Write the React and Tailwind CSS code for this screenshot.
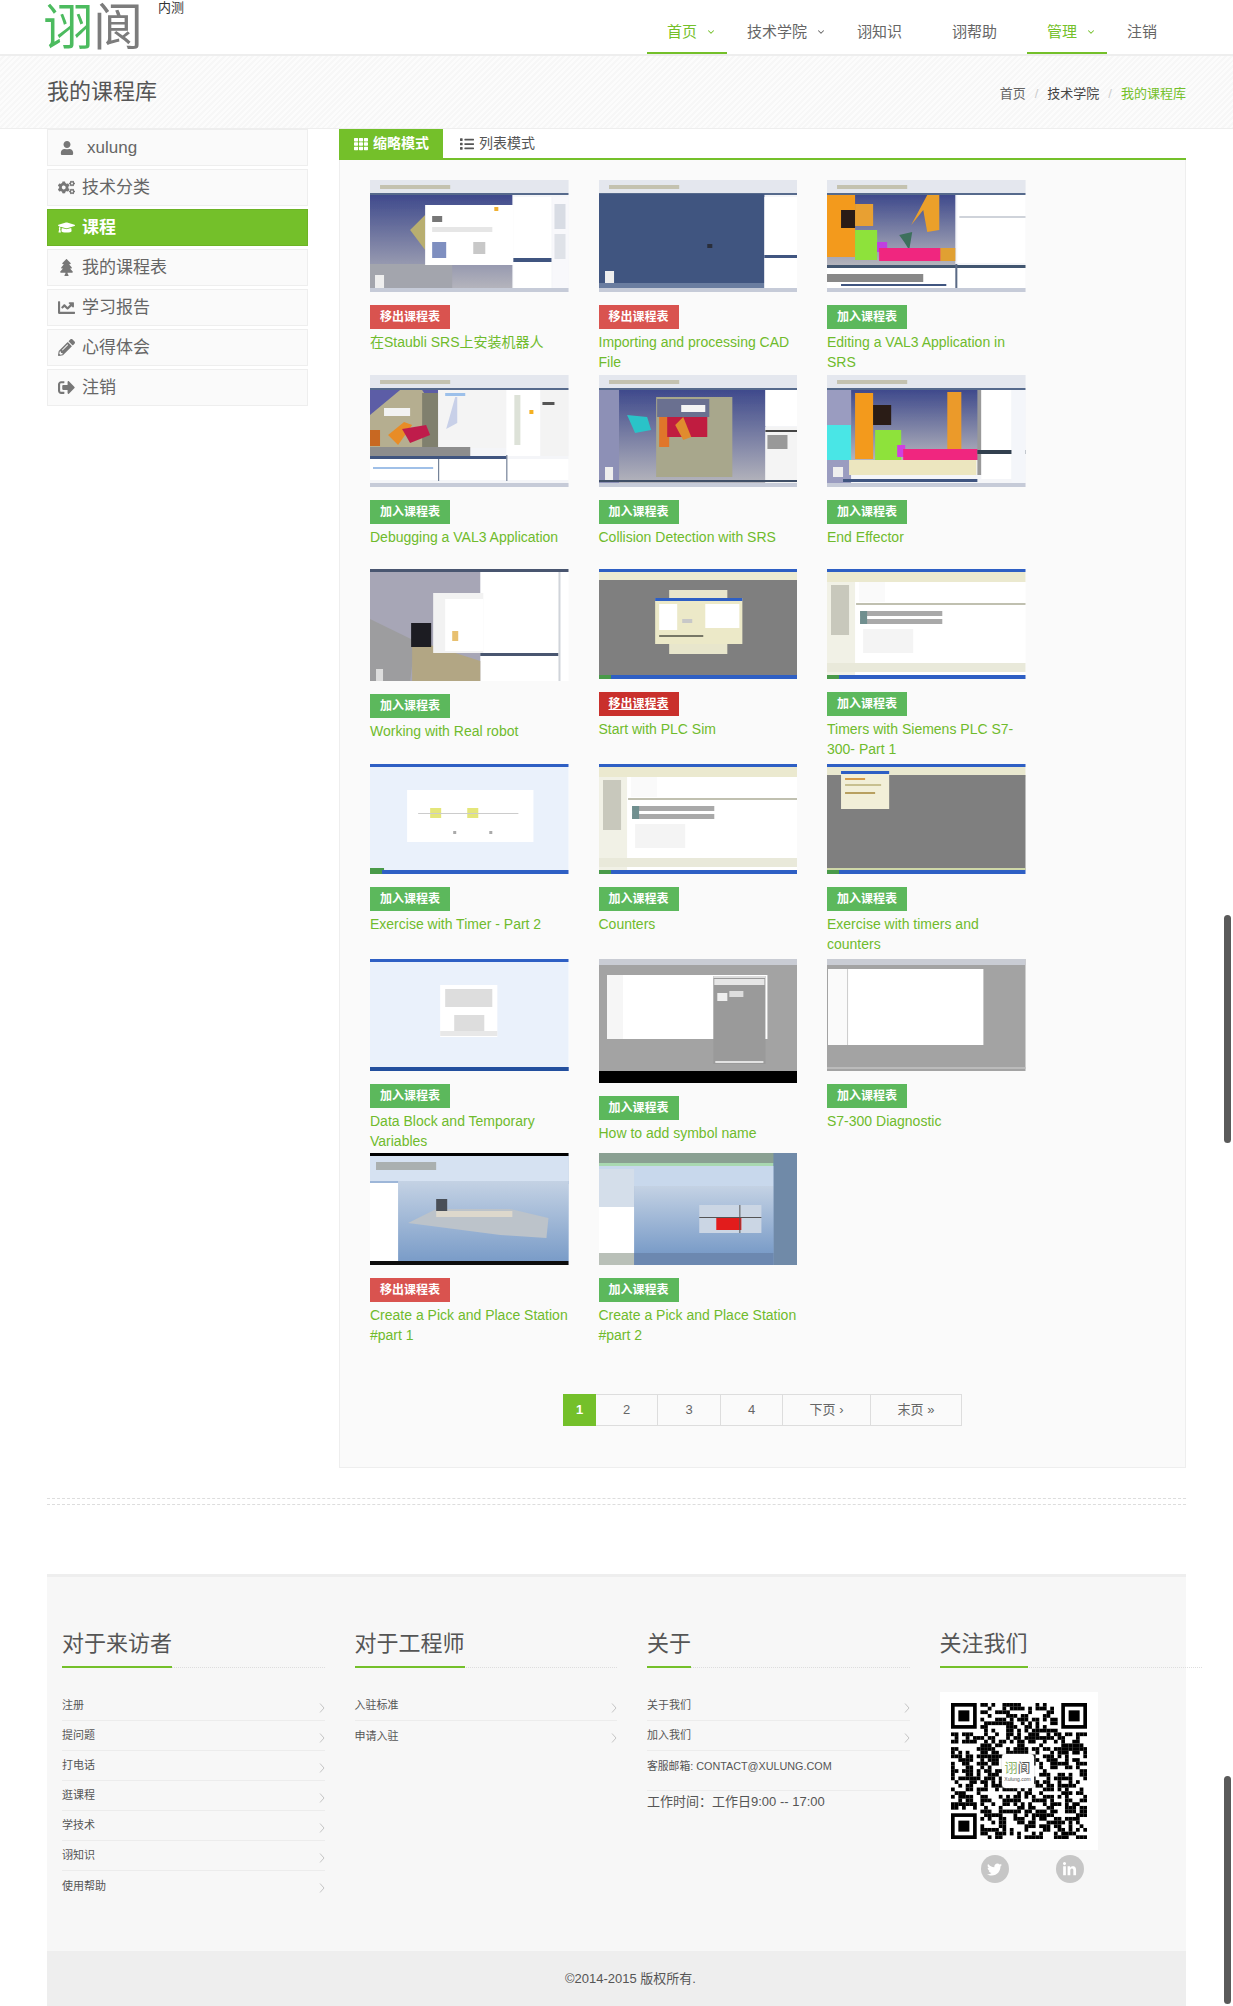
import React from 'react';
import { ChevronDown } from 'lucide-react';
import { FaUser, FaCogs, FaGraduationCap, FaTree, FaChartLine, FaPencilAlt, FaSignOutAlt, FaTwitter, FaLinkedinIn, FaTh, FaList } from 'react-icons/fa';

// screenshots in the course grid are drawn as blurred rect sketches
const srsTop = [
    [0, 0, 198, 112, '#f4f5f8'], [0, 0, 198, 13, '#e4e7ee'], [10, 5, 70, 4, '#c4c2b0'],
    [0, 13, 198, 2, '#566a8c'], [0, 108, 198, 4, '#c6cbd8'],
];
const winTop = (h) => [
    [0, 0, 198, h, '#ffffff'], [0, 0, 198, 3, '#2f5fc4'], [0, h - 4, 198, 4, '#2f5fc4'], [0, h - 4, 12, 4, '#4a9a4a'],
];
const plcFrame = (h) => [
    ...winTop(h),
    [0, 3, 198, 10, '#ebe9cf'], [0, 13, 28, h - 17, '#f1f1e6'], [4, 16, 18, 50, '#c8c8bc'], [32, 13, 26, 20, '#fafafa'],
    [29, 34, 169, 2, '#c0c0b0'], [33, 42, 82, 5, '#a9a9a9'], [33, 50, 82, 5, '#a9a9a9'], [33, 42, 7, 13, '#6f8f8f'],
    [36, 60, 50, 24, '#f4f4f4'], [0, h - 16, 198, 9, '#e9e9da'],
];

const thumbs = {
    staubli: [...srsTop,
        [0, 15, 142, 93, 'url(#srs)'], [0, 84, 82, 24, '#a3a5ad'], [5, 95, 9, 13, '#eeeeee'],
        ['poly', '40,50 55,35 55,70', '#b8ae70'], [55, 25, 88, 60, '#ffffff'], [62, 62, 14, 16, '#7f8fc0'], [103, 62, 12, 12, '#c8c8c8'],
        [124, 27, 4, 4, '#f0b030'], [62, 36, 10, 6, '#777777'], [62, 47, 60, 5, '#e6e6e6'],
        [143, 17, 38, 61, '#ffffff'], [143, 78, 38, 4, '#3f5580'], [143, 82, 38, 26, '#ffffff'],
        [182, 17, 16, 91, '#f8f8fb'], [184, 24, 11, 25, '#d8dce4'], [184, 54, 11, 25, '#dfe2e8'],
    ],
    cad: [...srsTop,
        [0, 14, 165, 89, '#3f5580'], [0, 103, 165, 5, '#6a7da0'], [165, 17, 33, 58, '#ffffff'], [165, 75, 33, 3, '#3f5580'],
        [165, 78, 33, 30, '#ffffff'], [6, 91, 9, 12, '#eeeeee'], [108, 64, 5, 4, '#2a2f3a'],
    ],
    editVal: [...srsTop,
        [0, 15, 128, 70, 'url(#srs)'], [0, 15, 28, 62, '#f39a1e'], [14, 30, 14, 18, '#2a1c12'], [28, 24, 18, 22, '#e8a030'],
        [28, 50, 22, 30, '#8ee23a'], [50, 62, 10, 10, '#c040e0'],
        ['poly', '84,45 100,15 112,15 112,50 100,52 96,30', '#eba02a'], ['poly', '72,55 85,52 82,70 77,62', '#3c6f5c'],
        [52, 68, 66, 13, '#f0257f'], [113, 68, 15, 13, '#e0a030'], [0, 85, 198, 3, '#43566f'], [130, 15, 68, 68, '#ffffff'], [132, 36, 66, 2, '#cfd3da'],
        [0, 88, 128, 20, '#ffffff'], [0, 94, 96, 8, '#888888'], [130, 88, 68, 20, '#ffffff'], [128, 84, 2, 24, '#5a6a85'], [14, 104, 105, 2, '#3f5580'],
    ],
    debug: [...srsTop,
        [0, 15, 68, 58, '#5b5da6'], ['poly', '0,40 30,15 52,15 68,40 68,73 0,73', '#b5ae90'], [52, 18, 16, 55, '#80806e'],
        [14, 33, 26, 8, '#f2f2f2'], ['poly', '18,60 34,47 42,50 28,70', '#e88c26'], ['poly', '32,54 56,50 60,60 40,68', '#bf1f4c'],
        [0, 55, 10, 16, '#c86820'], [68, 15, 68, 58, '#f4f4f4'], [75, 18, 20, 3, '#9cc0ea'], ['poly', '85,22 87,22 87,48 76,54', '#c8d0e8'],
        [0, 72, 100, 9, '#8d8d8d'], [136, 15, 34, 66, '#ffffff'], [144, 20, 6, 50, '#dde2d8'], [159, 35, 4, 4, '#f4b020'], [170, 15, 28, 66, '#f3f3f3'],
        [172, 27, 12, 3, '#555555'], [0, 81, 136, 3, '#3f5580'], [0, 84, 198, 21, '#ffffff'], [68, 84, 1, 22, '#5a6a85'], [3, 92, 60, 2, '#a0c0e8'],
        [136, 80, 1, 26, '#5a6a85'],
    ],
    collision: [...srsTop,
        [0, 15, 166, 93, 'url(#srs)'], [0, 15, 20, 93, '#8d90b6'], [57, 22, 76, 80, '#a8a78c'], [58, 24, 52, 18, '#6a6f90'],
        ['poly', '28,40 48,42 52,55 36,58', '#2cc3c8'], [60, 42, 10, 30, '#e0762a'], [68, 42, 40, 20, '#c01f40'], ['poly', '76,50 84,42 92,62 84,65', '#e08c2e'],
        [82, 30, 24, 7, '#f4f4f4'], [166, 15, 32, 36, '#ffffff'], [166, 52, 32, 56, '#f4f4f4'], [166, 55, 32, 2, '#444444'], [168, 60, 20, 14, '#999999'],
        [6, 92, 8, 14, '#eeeeee'], [0, 105, 198, 2, '#3f4f66'],
    ],
    endEffector: [...srsTop,
        [0, 15, 24, 93, '#9a9cc0'], [0, 50, 26, 35, '#48e6e6'], [24, 15, 128, 70, 'url(#srs)'], [28, 18, 18, 66, '#f39a1e'], [46, 30, 18, 20, '#2a1c12'],
        [48, 55, 26, 30, '#8ee23a'], [70, 70, 8, 12, '#d040e0'], [120, 17, 14, 68, '#eb9a2a'], [76, 74, 75, 11, '#f0257f'],
        [22, 85, 127, 15, '#ece6bf'], [150, 15, 4, 85, '#999999'], [154, 15, 30, 60, '#ffffff'], [150, 75, 48, 4, '#333f50'], [154, 79, 30, 25, '#ffffff'],
        [184, 15, 14, 93, '#f4f6fa'], [6, 92, 10, 10, '#eeeeee'], [16, 104, 134, 3, '#3f5580'],
    ],
    robot: [
        [0, 0, 198, 112, '#ffffff'], [0, 0, 198, 3, '#4a5670'], [0, 3, 110, 109, '#a7a6b6'],
        ['poly', '0,50 45,72 40,112 0,112', '#9d9d9f'], ['poly', '42,74 60,76 110,92 110,112 42,112', '#b2a684'], [41, 54, 20, 24, '#1e1e22'],
        [63, 24, 50, 60, '#f2f2f2'], [75, 30, 38, 52, '#ffffff'], [82, 62, 6, 10, '#e8c070'], [110, 84, 78, 3, '#48566f'], [188, 3, 2, 109, '#d0d4da'],
        [6, 100, 7, 12, '#dddddd'],
    ],
    plcsim: [
        ...winTop(110), [0, 3, 198, 8, '#ecebd2'], [0, 11, 198, 95, '#7f7f7f'], [70, 21, 58, 64, '#e8e6cc'], [56, 29, 87, 46, '#ece9c8'], [56, 29, 87, 3, '#2f5fc4'],
        [60, 35, 18, 26, '#ffffff'], [106, 35, 34, 24, '#ffffff'], [83, 50, 10, 4, '#c8c8c8'], [60, 66, 44, 2, '#777766'],
    ],
    timers: plcFrame(110),
    timer2: [...winTop(110), [0, 3, 198, 103, '#eaf1fb'], [37, 26, 126, 52, '#ffffff'], [60, 44, 11, 10, '#e4e67a'], [97, 44, 11, 10, '#e4e67a'], [48, 49, 100, 1, '#cccccc'],
        [83, 67, 3, 3, '#aaaaaa'], [119, 67, 3, 3, '#aaaaaa'], [0, 104, 14, 2, '#4a9a4a']],
    counters: plcFrame(110),
    exercise: [...winTop(110), [0, 3, 198, 10, '#e9e8cf'], [0, 11, 198, 95, '#7f7f7f'], [14, 7, 48, 38, '#f2efd8'], [14, 7, 48, 3, '#2f5fc4'], [18, 14, 20, 2, '#d69c4a'], [18, 20, 36, 2, '#c8c090'], [18, 28, 30, 2, '#b8a060'], [0, 104, 198, 2, '#cfd8a8']],
    datablock: [...winTop(112), [0, 3, 198, 105, '#eaf1fb'], [70, 26, 57, 52, '#ffffff'], [75, 30, 47, 18, '#dddddd'], [84, 56, 30, 18, '#dddddd'], [70, 72, 57, 5, '#e8e8e8'], [0, 108, 198, 4, '#234f9e']],
    symbol: [
        [0, 0, 198, 124, '#a3a3a3'], [0, 0, 198, 6, '#c9ccd4'], [8, 16, 160, 64, '#ffffff'], [8, 16, 16, 64, '#f6f6f6'], [114, 17, 52, 88, '#9a9a9a'],
        [114, 17, 52, 2, '#dddddd'], [115, 20, 50, 6, '#e6e6e6'], [118, 34, 10, 8, '#eeeeee'], [130, 32, 14, 6, '#dddddd'], [116, 102, 48, 2, '#e2e2e2'],
        [0, 112, 198, 12, '#000000'],
    ],
    diag: [
        [0, 0, 198, 112, '#a3a3a3'], [0, 0, 198, 6, '#c9ccd4'], [1, 10, 155, 76, '#ffffff'], [1, 10, 20, 76, '#fafafa'], [20, 10, 1, 76, '#cccccc'], [0, 108, 198, 2, '#bbbbbb'],
    ],
    pick1: [
        [0, 0, 198, 112, '#a9c0de'], [0, 0, 198, 3, '#000000'], [0, 3, 198, 27, '#d6e2f2'], [6, 9, 60, 8, '#aab0b0'], [0, 28, 198, 3, '#9db6d8'],
        ['poly', '28,28 198,28 198,108 28,108', 'url(#sky)'], [0, 30, 28, 78, '#ffffff'],
        ['poly', '38,70 66,56 140,56 178,65 176,85 130,82', '#bcc3ca'], [66, 58, 76, 6, '#ddd8cc'], [66, 46, 11, 12, '#4a5058'], [0, 108, 198, 4, '#111111'],
    ],
    pick2: [
        [0, 0, 198, 112, '#8fa8cc'], [0, 0, 198, 10, '#8aa092'], [0, 10, 174, 3, '#a8d8b0'], [174, 0, 24, 112, '#6f8aa8'], [0, 13, 174, 20, '#c8d8ec'],
        ['poly', '35,33 174,33 174,100 35,100', 'url(#sky)'], [0, 16, 35, 38, '#d4deea'], [0, 54, 35, 46, '#ffffff'], [0, 100, 35, 12, '#b9c0b8'],
        [35, 100, 139, 12, '#6c88b0'], [100, 52, 62, 28, '#cbd6e4'], [117, 64, 25, 13, '#e21a1a'], [100, 64, 62, 1, '#555555'], [140, 52, 1, 28, '#555555'],
    ],
};

const Thumb = ({ name, h = 112 }) => (
    <svg viewBox={`0 0 198 ${h}`} preserveAspectRatio="none" className="block w-full" style={{ height: h }}>
        <defs>
            <linearGradient id="srs" x1="0" y1="0" x2="0" y2="1">
                <stop offset="0" stopColor="#3f4a8c" />
                <stop offset="1" stopColor="#b4b4bc" />
            </linearGradient>
            <linearGradient id="sky" x1="0" y1="0" x2="0" y2="1">
                <stop offset="0" stopColor="#c4d2e4" />
                <stop offset="1" stopColor="#7a9cc8" />
            </linearGradient>
            <filter id="soft" x="0" y="0" width="1" height="1">
                <feGaussianBlur stdDeviation="0.7" />
            </filter>
        </defs>
        <g filter="url(#soft)">
            {thumbs[name].map((s, i) => s[0] === 'poly'
                ? <polygon key={i} points={s[1]} fill={s[2]} />
                : <rect key={i} x={s[0]} y={s[1]} width={s[2]} height={s[3]} fill={s[4]} />)}
        </g>
    </svg>
);

const courses = [
    { name: 'staubli', title: '在Staubli SRS上安装机器人', state: 'out' },
    { name: 'cad', title: 'Importing and processing CAD File', state: 'out' },
    { name: 'editVal', title: 'Editing a VAL3 Application in SRS' },
    { name: 'debug', title: 'Debugging a VAL3 Application' },
    { name: 'collision', title: 'Collision Detection with SRS' },
    { name: 'endEffector', title: 'End Effector' },
    { name: 'robot', title: 'Working with Real robot' },
    { name: 'plcsim', h: 110, title: 'Start with PLC Sim', state: 'hover' },
    { name: 'timers', h: 110, title: 'Timers with Siemens PLC S7-300- Part 1' },
    { name: 'timer2', h: 110, title: 'Exercise with Timer - Part 2' },
    { name: 'counters', h: 110, title: 'Counters' },
    { name: 'exercise', h: 110, title: 'Exercise with timers and counters' },
    { name: 'datablock', title: 'Data Block and Temporary Variables' },
    { name: 'symbol', h: 124, title: 'How to add symbol name' },
    { name: 'diag', title: 'S7-300 Diagnostic' },
    { name: 'pick1', title: 'Create a Pick and Place Station #part 1', state: 'out' },
    { name: 'pick2', title: 'Create a Pick and Place Station #part 2' },
];

const sideItems = [
    { label: '技术分类', icon: FaCogs },
    { label: '课程', icon: FaGraduationCap, active: true },
    { label: '我的课程表', icon: FaTree },
    { label: '学习报告', icon: FaChartLine },
    { label: '心得体会', icon: FaPencilAlt },
    { label: '注销', icon: FaSignOutAlt },
];

const navItems = [
    { label: '首页', w: 'w-[80px]', caret: true, active: true },
    { label: '技术学院', w: 'w-[110px]', caret: true },
    { label: '诩知识', w: 'w-[95px]' },
    { label: '诩帮助', w: 'w-[95px]' },
    { label: '管理', w: 'w-[80px]', caret: true, active: true },
    { label: '注销', w: 'w-[70px]' },
];

const pages = [
    { label: '1', w: 'w-[33px]', active: true },
    { label: '2', w: 'w-[61px]' },
    { label: '3', w: 'w-[63px]' },
    { label: '4', w: 'w-[62px]' },
    { label: '下页 ›', w: 'w-[88px]' },
    { label: '末页 »', w: 'w-[91px]' },
];

// deterministic fake QR matrix, finder squares in three corners
const QR_SIZE = 37;
const qrCells = (() => {
    const cells = [];
    let seed = 20140715;
    const inFinder = (x, y) => (x < 8 && y < 8) || (x >= QR_SIZE - 8 && y < 8) || (x < 8 && y >= QR_SIZE - 8);
    for (let y = 0; y < QR_SIZE; y++) {
        for (let x = 0; x < QR_SIZE; x++) {
            seed = (seed * 1103515245 + 12345) & 0x7fffffff;
            if (!inFinder(x, y) && (seed >> 16) % 100 < 52) cells.push([x, y]);
        }
    }
    return cells;
})();

const Finder = ({ x, y }) => (
    <g>
        <rect x={x} y={y} width="7" height="7" fill="#000" />
        <rect x={x + 1} y={y + 1} width="5" height="5" fill="#fff" />
        <rect x={x + 2} y={y + 2} width="3" height="3" fill="#000" />
    </g>
);

const QrCode = () => (
    <div className="relative h-[158px] w-[158px] bg-white p-[11px]">
        <svg viewBox={`0 0 ${QR_SIZE} ${QR_SIZE}`} className="block h-[136px] w-[136px]">
            {qrCells.map(([x, y]) => <rect key={`${x}-${y}`} x={x} y={y} width="1.02" height="1.02" fill="#000" />)}
            <Finder x={0} y={0} />
            <Finder x={QR_SIZE - 7} y={0} />
            <Finder x={0} y={QR_SIZE - 7} />
        </svg>
        <div className="absolute left-[62px] top-[62px] flex h-[34px] w-[32px] flex-col items-center justify-center rounded-[4px] bg-white shadow-[0_0_2px_#bbb]">
            <div className="text-[13px] leading-[16px]">
                <span className="text-[#8cb369]">诩</span><span className="text-[#555]">阆</span>
            </div>
            <div className="text-[5px] leading-[7px] text-[#555]">Xulung.com</div>
        </div>
    </div>
);

const FootChevron = () => (
    <svg viewBox="0 0 6 10" className="mt-[4px] h-[10px] w-[6px] shrink-0">
        <polyline points="1,0.5 5,5 1,9.5" fill="none" stroke="#c4c4c4" strokeWidth="1" />
    </svg>
);

const FootRow = ({ label, last }) => (
    <div className={`flex h-[30px] items-center justify-between text-[11px] text-[#555] ${last ? '' : 'border-b border-[#ececec]'}`}>
        <span>{label}</span>
        <FootChevron />
    </div>
);

const FootHead = ({ children }) => (
    <div className="border-b border-dotted border-[#ddd]">
        <h3 className="-mb-px w-fit border-b-2 border-[#74c02a] pb-[7px] text-[22px] leading-[30px] font-normal text-[#555]">{children}</h3>
    </div>
);

export default function App() {
    return (
        <div className="relative h-[2006px] w-[1233px] overflow-hidden bg-white [font-family:'Liberation_Sans','Noto_Sans_CJK_SC',sans-serif]">
            <header className="flex h-[56px] border-b-2 border-[#eeeeee] bg-white">
                <div className="ml-[43px] mt-[3px] text-[50px] leading-[50px]">
                    <span className="text-[#4cbb5f]">诩</span><span className="text-[#7c7c7c]">阆</span>
                </div>
                <div className="ml-[15px] text-[13px] leading-[16px] text-[#333]">内测</div>
                <nav className="ml-auto mr-[56px] flex">
                    {navItems.map((n) => (
                        <div key={n.label} className={`${n.w} flex h-[54px] items-center gap-[9px] border-b-2 pl-5 pt-[12px] text-[15px] ${n.active ? 'border-[#74c02a] text-[#74c02a]' : 'border-transparent text-[#666]'}`}>
                            {n.label}
                            {n.caret && <ChevronDown size={10} strokeWidth={2.5} className={n.active ? 'text-[#74c02a]' : 'text-[#666]'} />}
                        </div>
                    ))}
                </nav>
            </header>

            <div className="flex h-[73px] items-center justify-between border-b border-[#eeeeee] bg-[repeating-linear-gradient(135deg,#fcfcfc_0px,#fcfcfc_2px,#f7f7f7_2px,#f7f7f7_4px)] pl-[47px] pr-[47px]">
                <h1 className="pb-[2px] text-[22px] font-normal text-[#555]">我的课程库</h1>
                <div className="flex gap-[9px] pt-[4px] text-[13px] text-[#666]">
                    <span>首页</span>
                    <span className="text-[#ccc]">/</span>
                    <span className="text-[#444]">技术学院</span>
                    <span className="text-[#ccc]">/</span>
                    <span className="text-[#74c02a]">我的课程库</span>
                </div>
            </div>

            <div className="flex pl-[47px]">
                <aside className="w-[261px]">
                    <div className="mb-[3px] flex h-[37px] items-center border border-[#eeeeee] bg-[#fafafa] pl-[12px] text-[17px] text-[#666]">
                        <FaUser size={14} className="text-[#777]" />
                        <span className="ml-[13px]">xulung</span>
                    </div>
                    {sideItems.map((item) => (
                        <div key={item.label} className={`mb-[3px] flex h-[37px] items-center border text-[17px] ${item.active ? 'border-[#6db325] bg-[#74c02a] font-bold text-white' : 'border-[#eeeeee] bg-[#fafafa] text-[#666]'}`}>
                            <span className="flex w-[34px] justify-center pl-[2px]">
                                <item.icon size={17} className={item.active ? 'text-white' : 'text-[#777]'} />
                            </span>
                            {item.label}
                        </div>
                    ))}
                </aside>

                <main className="ml-[31px] w-[847px]">
                    <div className="flex h-[31px] border-b-2 border-[#74c02a] text-[14px]">
                        <div className="flex h-[29px] w-[104px] items-center gap-[5px] bg-[#74c02a] pl-[15px] font-bold text-white">
                            <FaTh size={14} />缩略模式
                        </div>
                        <div className="flex h-[29px] items-center gap-[5px] pl-[17px] text-[#555]">
                            <FaList size={14} />列表模式
                        </div>
                    </div>

                    <div className="h-[1308px] border-x border-b border-[#eeeeee] bg-[#fafafa] pl-[30px] pt-[20px]">
                        <div className="grid grid-cols-[repeat(3,228.5px)] auto-rows-[194.68px]">
                            {courses.map((c) => (
                                <div key={c.name} className="w-[198.5px]">
                                    <Thumb name={c.name} h={c.h} />
                                    <div className={`mt-[13px] flex h-[24px] w-[80px] items-center justify-center text-[12px] font-bold text-white ${c.state === 'out' ? 'bg-[#d9534f]' : c.state === 'hover' ? 'bg-[#c9302c] underline' : 'bg-[#5cb85c]'}`}>
                                        {c.state ? '移出课程表' : '加入课程表'}
                                    </div>
                                    <div className="mt-[3px] text-[14px] leading-[20px] text-[#6fbb2c]">{c.title}</div>
                                </div>
                            ))}
                        </div>
                        <div className="ml-[193px] mt-[46px] flex h-[32px] w-fit border border-l-0 border-[#dddddd] text-[13px] text-[#666]">
                            {pages.map((p, i) => (
                                <div key={p.label} className={`${p.w} flex items-center justify-center ${p.active ? '-my-px bg-[#74c02a] font-bold text-white' : ''} ${i > 1 ? 'border-l border-[#dddddd]' : ''}`}>
                                    {p.label}
                                </div>
                            ))}
                        </div>
                    </div>
                </main>
            </div>

            <div className="ml-[47px] mr-[47px] mt-[30px] h-[7px] border-y border-dashed border-[#dddddd]" />

            <footer className="ml-[47px] mr-[47px] mt-[69px]">
                <div className="h-[377px] border-t-[3px] border-[#eeeeee] bg-[#f7f7f7] pt-[52px]">
                    <div className="grid w-[1170px] grid-cols-4">
                        <div className="px-[15px]">
                            <FootHead>对于来访者</FootHead>
                            <div className="mt-[23px]">
                                {['注册', '提问题', '打电话', '逛课程', '学技术', '诩知识'].map((l) => <FootRow key={l} label={l} />)}
                                <FootRow label="使用帮助" last />
                            </div>
                        </div>
                        <div className="px-[15px]">
                            <FootHead>对于工程师</FootHead>
                            <div className="mt-[23px]">
                                <FootRow label="入驻标准" />
                                <FootRow label="申请入驻" last />
                            </div>
                        </div>
                        <div className="px-[15px]">
                            <FootHead>关于</FootHead>
                            <div className="mt-[23px] text-[#555]">
                                <FootRow label="关于我们" />
                                <FootRow label="加入我们" />
                                <div className="h-[40px] border-b border-[#ececec] pt-[6px] text-[10.8px] leading-[18px]">客服邮箱: CONTACT@XULUNG.COM</div>
                                <div className="pt-[1px] text-[13px] leading-[20px]">工作时间：工作日9:00 -- 17:00</div>
                            </div>
                        </div>
                        <div className="px-[15px]">
                            <FootHead>关注我们</FootHead>
                            <div className="mt-[24px]">
                                <QrCode />
                                <div className="mt-[5px] flex gap-[47px] pl-[41px]">
                                    <span className="flex h-[28px] w-[28px] items-center justify-center rounded-full bg-[#c6c6c6] text-white"><FaTwitter size={15} /></span>
                                    <span className="flex h-[28px] w-[28px] items-center justify-center rounded-full bg-[#c6c6c6] text-white"><FaLinkedinIn size={15} /></span>
                                </div>
                            </div>
                        </div>
                    </div>
                </div>
                <div className="flex h-[55px] w-full items-center bg-[#eeeeee] text-[13px] text-[#555]">
                    <span className="ml-[518px]">©2014-2015 版权所有.</span>
                </div>
            </footer>

            <div className="absolute left-[1224px] top-[915px] h-[228px] w-[7px] rounded-full bg-[#5a5a5a]" />
            <div className="absolute left-[1224px] top-[1776px] h-[228px] w-[7px] rounded-full bg-[#5a5a5a]" />
        </div>
    );
}
